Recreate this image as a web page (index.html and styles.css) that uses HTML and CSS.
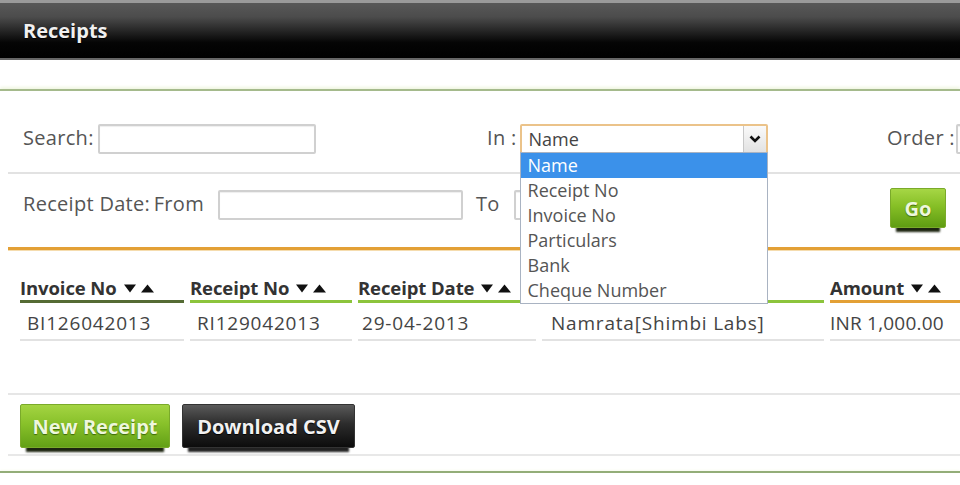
FILE: index.html
```html
<!DOCTYPE html>
<html lang="en">
<head>
  <meta charset="UTF-8">
  <title>Receipts</title>
  <link rel="stylesheet" href="styles.css">
</head>
<body>
  <div class="topbar">
    <h1>Receipts</h1>
  </div>

  <div class="panel">
    <div class="filters">
      <div class="filter-row first">
        <div class="field field-search">
          <label>Search:</label>
          <input type="text" class="textbox search-box">
        </div>
        <div class="field field-in">
          <label>In :</label>
          <div class="select">
            <span class="select-value">Name</span>
            <span class="select-arrow">
              <svg width="12" height="8" viewBox="0 0 12 8"><path d="M1.5 1.5 6 6l4.5-4.5" fill="none" stroke="#111" stroke-width="2.6"/></svg>
            </span>
            <ul class="options">
              <li class="active">Name</li>
              <li>Receipt No</li>
              <li>Invoice No</li>
              <li>Particulars</li>
              <li>Bank</li>
              <li>Cheque Number</li>
            </ul>
          </div>
        </div>
        <div class="field field-order">
          <label>Order :</label>
          <input type="text" class="textbox order-box">
        </div>
      </div>

      <div class="filter-row second">
        <label>Receipt Date:&thinsp;From</label>
        <input type="text" class="textbox date-box from-box">
        <label class="to-label">To</label>
        <input type="text" class="textbox date-box to-box">
        <div class="btn btn-go">Go</div>
      </div>
    </div>

    <div class="grid">
      <div class="th th-first"><span>Invoice No</span><svg class="sort" viewBox="0 0 32 10"><path d="M1 1.5h12L7 9.5zM18 9.5h13L24.5 1.5z" fill="#111"/></svg></div>
      <div class="th"><span>Receipt No</span><svg class="sort" viewBox="0 0 32 10"><path d="M1 1.5h12L7 9.5zM18 9.5h13L24.5 1.5z" fill="#111"/></svg></div>
      <div class="th"><span>Receipt Date</span><svg class="sort" viewBox="0 0 32 10"><path d="M1 1.5h12L7 9.5zM18 9.5h13L24.5 1.5z" fill="#111"/></svg></div>
      <div class="th"><span>Particulars</span><svg class="sort" viewBox="0 0 32 10"><path d="M1 1.5h12L7 9.5zM18 9.5h13L24.5 1.5z" fill="#111"/></svg></div>
      <div class="th th-last"><span>Amount</span><svg class="sort" viewBox="0 0 32 10"><path d="M1 1.5h12L7 9.5zM18 9.5h13L24.5 1.5z" fill="#111"/></svg></div>

      <div class="td">BI126042013</div>
      <div class="td">RI129042013</div>
      <div class="td td-date">29-04-2013</div>
      <div class="td td-name">Namrata[Shimbi Labs]</div>
      <div class="td td-amount">INR 1,000.00</div>
    </div>

    <div class="actions">
      <div class="btn btn-green">New Receipt</div>
      <div class="btn btn-dark">Download CSV</div>
    </div>
  </div>

  <div class="footer-line"></div>
</body>
</html>
```

FILE: styles.css
```css
body{
  margin: 0;
  font-family: "Open Sans", "Liberation Sans", sans-serif;
  color: #555;
  background: #fff;
  overflow: hidden;
}

.topbar{
  height: 55px;
  border-top: 3px solid #9a9a9a;
  border-bottom: 2px solid #666;
  background: linear-gradient(#585858 0%, #4c4c4c 25%, #050505 72%, #000 100%);
  display: flex;
  align-items: center;
  padding-left: 23px;
}
.topbar h1{
  margin: 0;
  font-size: 20px;
  font-weight: 700;
  color: #f0f0f0;
  text-shadow: 0 1px 1px #000;
}

.panel{
  margin-top: 29px;
  border-top: 2px solid #a5ba8c;
  box-shadow: 0 -2px 3px #f0f6e2;
  overflow: hidden;
}

.filters{
  margin-left: 8px;
  border-bottom: 3px solid #e3a035;
  box-shadow: 0 1px 0 #f5dcae;
}
.filter-row{
  display: flex;
  align-items: center;
  padding-left: 15px;
  font-size: 20px;
  letter-spacing: 0.3px;
  white-space: nowrap;
}
.filter-row > *{
  flex-shrink: 0;
}
.filter-row.first{
  padding-top: 33px;
  padding-bottom: 18px;
  border-bottom: 2px solid #e2e2e2;
}
.filter-row.second{
  height: 73px;
  box-sizing: border-box;
  padding-top: 16px;
  align-items: flex-start;
}
.filter-row.second label{
  line-height: 28px;
}
.field{
  display: flex;
  align-items: center;
}
.field > *{
  flex-shrink: 0;
}
.field label{
  padding-bottom: 3px;
}
.field-search{
  width: 464px;
}
.field-in{
  width: 400px;
}

.textbox{
  box-sizing: border-box;
  height: 30px;
  border: 2px solid #d0d0d0;
  border-radius: 2px;
  padding: 0;
  background: #fff;
  box-shadow: inset 0 1px 1px #eee;
}
.search-box{
  width: 218px;
  margin-left: 4px;
}
.order-box{
  width: 120px;
  margin-left: 1px;
}
.date-box{
  width: 245px;
}
.from-box{
  margin-left: 14px;
}
.to-label{
  margin-left: 13px;
}
.to-box{
  margin-left: 14px;
}

.select{
  position: relative;
  box-sizing: border-box;
  width: 248px;
  height: 30px;
  margin-left: 3px;
  border: 2px solid #ebc38a;
  border-radius: 2px;
  display: flex;
  align-items: center;
  font-size: 18px;
  letter-spacing: 0;
  color: #444;
}
.select-value{
  flex: 1;
  padding-left: 7px;
}
.select-arrow{
  width: 22px;
  height: 100%;
  border-left: 1px solid #c8c8c8;
  background: linear-gradient(#fafafa, #e2e2e2);
  display: flex;
  align-items: center;
  justify-content: center;
}
.options{
  position: absolute;
  top: 100%;
  left: -2px;
  width: 248px;
  box-sizing: border-box;
  margin: 0;
  padding: 0;
  list-style: none;
  background: #fff;
  border: 1px solid #a9b3c2;
  z-index: 5;
}
.options li{
  height: 25px;
  line-height: 25px;
  padding-left: 7px;
  color: #555;
}
.options li.active{
  background: #3b91ea;
  color: #fff;
}

.btn{
  display: inline-flex;
  align-items: center;
  justify-content: center;
  box-sizing: border-box;
  font-weight: 700;
  font-size: 20px;
  letter-spacing: 0;
  border-radius: 2px;
  cursor: pointer;
}
.btn-go{
  width: 56px;
  height: 40px;
  margin-left: auto;
  margin-right: 14px;
  margin-top: -2px;
  color: #eef7dc;
  background: linear-gradient(#a6d645, #86bf26 45%, #5f9c12);
  border: 1px solid #7aaa2a;
  text-shadow: 0 1px 1px #3d6a08;
  box-shadow: 0 10px 2px -6px #1c2410;
}
.btn-green{
  width: 150px;
  height: 44px;
  color: #eef7dc;
  background: linear-gradient(#a4d442, #88c12a 45%, #63a016);
  border: 1px solid #7aaa2a;
  text-shadow: 0 1px 1px #3d6a08;
  box-shadow: 0 10px 2px -6px #1c2410;
}
.btn-dark{
  width: 173px;
  height: 44px;
  margin-left: 12px;
  color: #f2f2f2;
  background: linear-gradient(#5a5a5a, #2c2c2c 45%, #0c0c0c);
  border: 1px solid #333;
  text-shadow: 0 1px 1px #000;
  box-shadow: 0 10px 2px -6px #222;
}

.grid{
  display: grid;
  grid-template-columns: 164px 162px 178px 282px 1fr;
  column-gap: 6px;
  margin-left: 20px;
  white-space: nowrap;
}
.th{
  margin-top: 26px;
  height: 24px;
  line-height: 24px;
  font-size: 18.5px;
  font-weight: 700;
  color: #333;
  letter-spacing: -0.1px;
  border-bottom: 3px solid #8cc43c;
  display: flex;
  align-items: center;
}
.th-first{
  border-bottom-color: #556b34;
}
.th-last{
  border-bottom-color: #e3a035;
}
.sort{
  flex: 0 0 32px;
  width: 32px;
  height: 10px;
  margin-left: 6px;
}
.td{
  padding-top: 4px;
  padding-left: 7px;
  line-height: 32px;
  font-size: 19px;
  color: #444;
  letter-spacing: 0.8px;
  border-bottom: 2px solid #e2e2e2;
}
.td-date{
  padding-left: 4px;
}
.td-name{
  padding-left: 9px;
}
.td-amount{
  padding-left: 0;
  letter-spacing: 0.2px;
}

.actions{
  margin-left: 8px;
  margin-top: 52px;
  padding: 9px 0 6px 12px;
  border-top: 2px solid #e6e6e6;
  border-bottom: 2px solid #e8e8e8;
  display: flex;
}

.footer-line{
  margin-top: 15px;
  border-top: 2px solid #93ad78;
  box-shadow: 0 0 3px #eef6dc;
}
```
